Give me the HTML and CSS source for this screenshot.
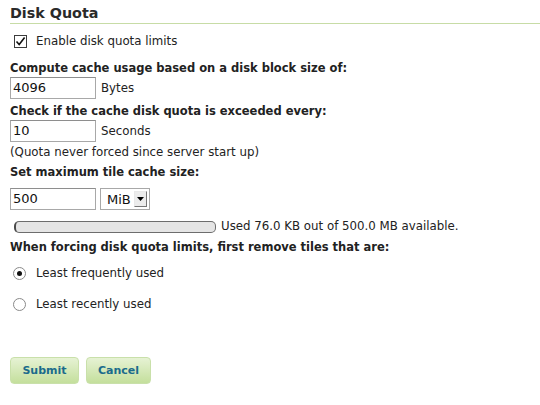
FILE: index.html
```html
<!DOCTYPE html>
<html>
<head>
<meta charset="utf-8">
<link rel="stylesheet" href="styles.css">
</head>
<body>
<div class="page">
  <h2 class="title">Disk Quota</h2>
  <div class="check-row">
    <span class="checkbox"><svg width="11" height="11" viewBox="0 0 11 11"><path d="M1.5 5.5 L4.2 8.6 L9.6 1.6" fill="none" stroke="#111" stroke-width="1.6"/></svg></span>
    <span>Enable disk quota limits</span>
  </div>
  <div class="label l1">Compute cache usage based on a disk block size of:</div>
  <div class="field-row r1"><span class="input">4096</span><span class="unit">Bytes</span></div>
  <div class="label l2">Check if the cache disk quota is exceeded every:</div>
  <div class="field-row r2"><span class="input">10</span><span class="unit">Seconds</span></div>
  <div class="note">(Quota never forced since server start up)</div>
  <div class="label l3">Set maximum tile cache size:</div>
  <div class="field-row r3">
    <span class="input">500</span>
    <span class="select"><span class="sel-text">MiB</span><span class="sel-btn"><svg width="7" height="4" viewBox="0 0 7 4"><path d="M0 0 H7 L3.5 4 Z" fill="#000"/></svg></span></span>
  </div>
  <div class="progress-row">
    <span class="bar"></span>
    <span class="used">Used 76.0 KB out of 500.0 MB available.</span>
  </div>
  <div class="label l4">When forcing disk quota limits, first remove tiles that are:</div>
  <div class="radio-row rr1"><span class="radio on"></span><span>Least frequently used</span></div>
  <div class="radio-row rr2"><span class="radio"></span><span>Least recently used</span></div>
  <div class="buttons">
    <span class="btn submit">Submit</span>
    <span class="btn cancel">Cancel</span>
  </div>
</div>
</body>
</html>
```
FILE: styles.css
```css
html, body {
  margin: 0;
  padding: 0;
  background: #fff;
}
body {
  font-family: "DejaVu Sans", Verdana, sans-serif;
  font-size: 11.8px;
  color: #222;
}
.page {
  padding: 0 0 0 10px;
}
.title {
  margin: 4px 0 0 0;
  font-size: 14.3px;
  line-height: 18px;
  font-weight: bold;
  color: #2a2a2a;
  padding-bottom: 1px;
  border-bottom: 1px solid #c7dca6;
}
.check-row {
  margin-top: 9px;
  display: flex;
  align-items: center;
  line-height: 16px;
  height: 16px;
}
.checkbox {
  width: 11px;
  height: 11px;
  border: 1px solid #3c3c3c;
  margin-left: 4px;
  margin-right: 9px;
  display: inline-flex;
  background: #fff;
}
.label {
  font-weight: bold;
  font-size: 11.5px;
  line-height: 16px;
}
.l1 { margin-top: 11px; }
.l2 { margin-top: 4px; }
.l3 { margin-top: 4px; }
.l4 { margin-top: 5px; }
.field-row {
  display: flex;
  align-items: center;
  height: 22px;
}
.r1 { margin-top: 1px; }
.r2 { margin-top: 1px; }
.r3 { margin-top: 8px; }
.input {
  box-sizing: border-box;
  width: 86px;
  height: 22px;
  border: 1px solid #a8a8a8;
  border-top-color: #8e8e8e;
  padding: 0 2px;
  font-size: 13px;
  line-height: 20px;
  color: #111;
}
.unit {
  margin-left: 5px;
}
.note {
  margin-top: 2px;
  line-height: 16px;
}
.select {
  box-sizing: border-box;
  margin-left: 4px;
  width: 50px;
  height: 22px;
  border: 1px solid #a8a8a8;
  display: flex;
  align-items: center;
  justify-content: space-between;
  padding: 0 2px 0 6px;
  font-size: 13px;
  color: #111;
}
.sel-btn {
  box-sizing: border-box;
  width: 13px;
  height: 16px;
  background: #ececec;
  border: 1px solid #e8e8e8;
  border-right-color: #777;
  border-bottom-color: #777;
  display: flex;
  align-items: center;
  justify-content: center;
}
.progress-row {
  margin-top: 8px;
  display: flex;
  align-items: center;
  line-height: 16px;
}
.bar {
  box-sizing: border-box;
  margin-left: 4px;
  width: 202px;
  height: 12px;
  border: 1px solid #6d6d6d;
  border-left: 2px solid #4a4a4a;
  border-radius: 5px;
  background: #e5e5e5;
  margin-top: 1px;
}
.used {
  margin-left: 5px;
}
.radio-row {
  display: flex;
  align-items: center;
  line-height: 16px;
}
.rr1 { margin-top: 10px; }
.rr2 { margin-top: 15px; }
.radio {
  box-sizing: border-box;
  width: 13px;
  height: 13px;
  border: 1px solid #8a8a8a;
  border-radius: 50%;
  background: #fff;
  margin-left: 3px;
  margin-right: 10px;
  position: relative;
}
.radio.on::after {
  content: "";
  position: absolute;
  left: 3px;
  top: 3px;
  width: 5px;
  height: 5px;
  border-radius: 50%;
  background: #111;
}
.buttons {
  margin-top: 45px;
  display: flex;
  gap: 7px;
}
.btn {
  box-sizing: border-box;
  height: 27px;
  display: flex;
  align-items: center;
  justify-content: center;
  border: 1px solid #c9e0aa;
  border-radius: 4px;
  background: linear-gradient(#e6f2d4, #c4df9c);
  color: #1b6b8c;
  font-weight: bold;
  font-size: 11px;
}
.submit { width: 69px; }
.cancel { width: 65px; }
```
